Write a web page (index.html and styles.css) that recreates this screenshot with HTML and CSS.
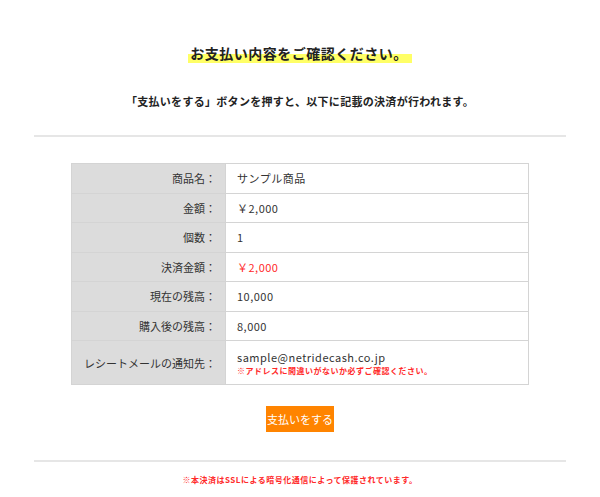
FILE: index.html
```html
<!DOCTYPE html>
<html lang="ja">
<head>
    <meta charset="UTF-8">
    <meta name="viewport" content="width=device-width, initial-scale=1.0">
    <title>お支払い内容の確認</title>
    <link rel="stylesheet" href="styles.css">
</head>
<body>
    <div class="page">
        <!-- Heading -->
        <div class="intro">
            <h1 class="title"><span class="marker">お支払い内容をご確認ください。</span></h1>
            <p class="lead">「支払いをする」ボタンを押すと、以下に記載の決済が行われます。</p>
        </div>

        <!-- Payment details -->
        <div class="confirm">
            <table class="detail">
                <tr>
                    <th>商品名：</th>
                    <td>サンプル商品</td>
                </tr>
                <tr>
                    <th>金額：</th>
                    <td>￥2,000</td>
                </tr>
                <tr>
                    <th>個数：</th>
                    <td>1</td>
                </tr>
                <tr>
                    <th>決済金額：</th>
                    <td class="price">￥2,000</td>
                </tr>
                <tr>
                    <th>現在の残高：</th>
                    <td>10,000</td>
                </tr>
                <tr>
                    <th>購入後の残高：</th>
                    <td>8,000</td>
                </tr>
                <tr class="mail-row">
                    <th>レシートメールの通知先：</th>
                    <td>
                        sample@netridecash.co.jp
                        <span class="note">※アドレスに間違いがないか必ずご確認ください。</span>
                    </td>
                </tr>
            </table>

            <button class="pay-btn" type="button">支払いをする</button>
        </div>

        <p class="ssl">※本決済はSSLによる暗号化通信によって保護されています。</p>
    </div>
</body>
</html>
```

FILE: styles.css
```css
/* Global */
body {
    margin: 0;
    font-family: "Noto Sans CJK JP", "Noto Sans", sans-serif;
    color: #333;
    background: #fff;
}

.page {
    width: 532px;
    margin: 0 auto;
}

/* Heading */
.intro {
    padding: 41px 0 24px;
    text-align: center;
    border-bottom: 2px solid #e6e6e6;
}

.title {
    margin: 0;
    font-size: 14px;
    line-height: 24px;
    font-weight: bold;
    color: #222;
    letter-spacing: 0.5px;
}

.marker {
    padding: 0 4px 0 2px;
    background: linear-gradient(transparent 55%, #ffff66 55%);
}

.lead {
    margin: 26px 0 0;
    font-size: 11px;
    line-height: 20px;
    font-weight: bold;
    color: #222;
    letter-spacing: 0.3px;
}

/* Details table */
.confirm {
    padding: 26px 0 28px;
    text-align: center;
    border-bottom: 2px solid #e6e6e6;
}

.detail {
    width: 458px;
    margin: 0 auto;
    table-layout: fixed;
    border-collapse: collapse;
    border: 1px solid #d4d4d4;
    font-size: 11px;
    text-align: left;
}

.detail th,
.detail td {
    height: 28.5px;
    padding: 0 11px;
    border: 1px solid #d4d4d4;
    border-width: 1px 1px 1px 0;
    font-weight: normal;
    letter-spacing: 0.5px;
}

.detail th {
    width: 140px;
    background: #dcdcdc;
    text-align: right;
    padding: 0 9px 0 4px;
    white-space: nowrap;
    letter-spacing: 0;
}

.detail td {
    background: #fff;
}

.detail .price {
    color: #ff2a2a;
}

.mail-row th,
.mail-row td {
    height: 41px;
}

.mail-row td {
    line-height: 15px;
    padding-top: 2px;
}

.note {
    display: block;
    font-size: 8px;
    line-height: 12px;
    font-weight: bold;
    color: #ff2a2a;
}

/* Pay button */
.pay-btn {
    margin-top: 21px;
    width: 68px;
    height: 26px;
    padding: 0;
    border: none;
    background: #ff8400;
    color: #fff;
    font-family: inherit;
    font-size: 11px;
    cursor: pointer;
}

/* Footer note */
.ssl {
    margin: 12px 0 0;
    text-align: center;
    font-size: 8px;
    font-weight: bold;
    color: #ff2a2a;
    letter-spacing: 0.5px;
}
```
